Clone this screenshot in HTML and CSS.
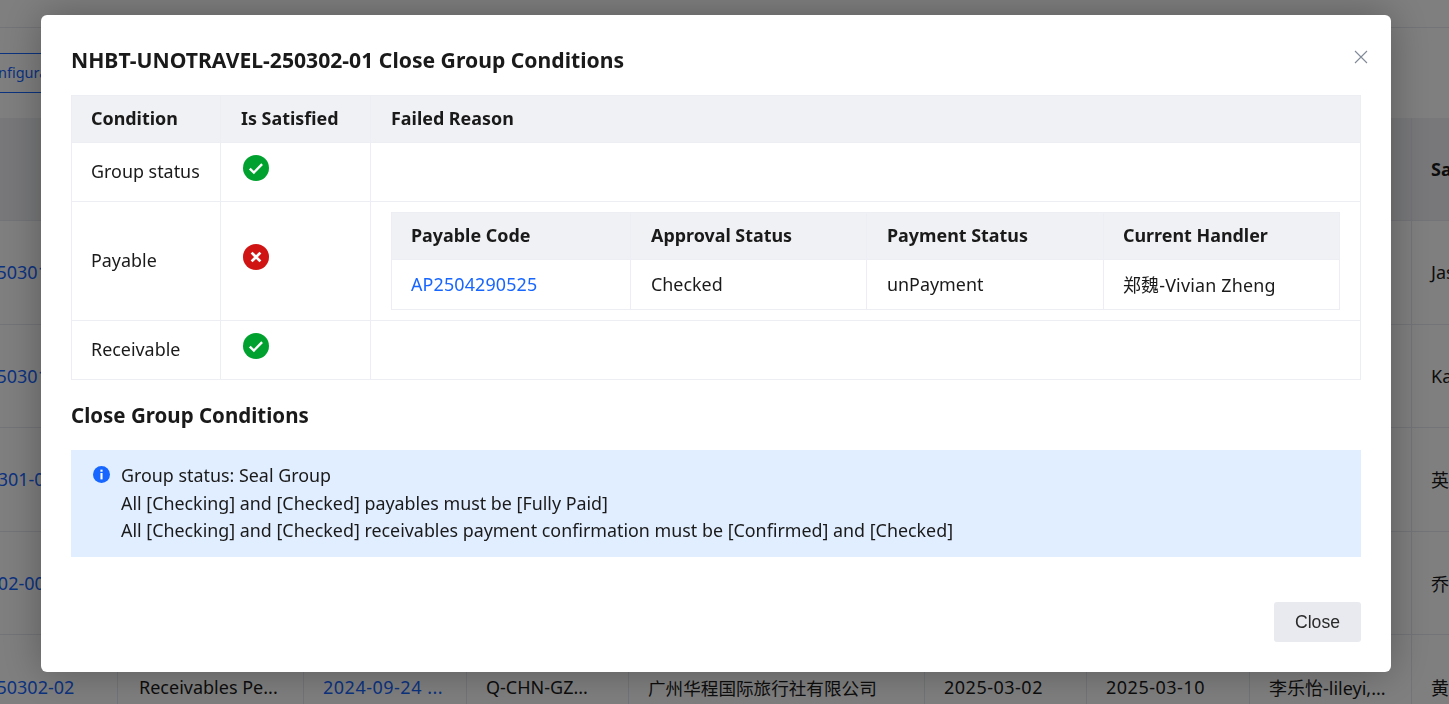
FILE: index.html
```html
<!DOCTYPE html>
<html lang="en">
<head>
<meta charset="utf-8">
<title>Close Group Conditions</title>
<link rel="stylesheet" href="styles.css">
</head>
<body>
<div class="page">
  <div class="topbar"></div>
  <div class="toolbar"><button class="cfg">Configuration</button></div>
  <div class="list">
    <div class="lrow lhead">
      <div class="c">Group Code</div><div class="c">Status</div><div class="c">Date</div><div class="c">Route</div><div class="c">Agency</div><div class="c">Start</div><div class="c">End</div><div class="c">Sales</div><div class="c">Sales</div>
    </div>
    <div class="lrow">
      <div class="c link">NHBT-UNOTRAVEL-250301</div><div class="c"></div><div class="c"></div><div class="c"></div><div class="c"></div><div class="c"></div><div class="c"></div><div class="c"></div><div class="c">Jason</div>
    </div>
    <div class="lrow">
      <div class="c link">NHBT-UNOTRAVEL-250301</div><div class="c"></div><div class="c"></div><div class="c"></div><div class="c"></div><div class="c"></div><div class="c"></div><div class="c"></div><div class="c">Kate</div>
    </div>
    <div class="lrow">
      <div class="c link">NHBT-UNOTRAV-250301-01</div><div class="c"></div><div class="c"></div><div class="c"></div><div class="c"></div><div class="c"></div><div class="c"></div><div class="c"></div><div class="c">英</div>
    </div>
    <div class="lrow">
      <div class="c link">NHBT-UNOTRA-250302-001</div><div class="c"></div><div class="c"></div><div class="c"></div><div class="c"></div><div class="c"></div><div class="c"></div><div class="c"></div><div class="c">乔</div>
    </div>
    <div class="lrow">
      <div class="c link">NHBT-UNOTRAVEL-250302-02</div><div class="c">Receivables Pe...</div><div class="c link num">2024-09-24 ...</div><div class="c">Q-CHN-GZ...</div><div class="c cjk">广州华程国际旅行社有限公司</div><div class="c num">2025-03-02</div><div class="c num">2025-03-10</div><div class="c">李乐怡-lileyi,...</div><div class="c">黄</div>
    </div>
  </div>
</div>
<div class="overlay"></div>
<div class="modal" role="dialog">
  <div class="mhead">
    <h2 class="title">NHBT-UNOTRAVEL-250302-01 Close Group Conditions</h2>
    <svg class="x" viewBox="0 0 14 14" width="14" height="14"><path d="M1 1l12 12M13 1L1 13" fill="none" stroke="#7f8a98" stroke-width="1.1"/></svg>
  </div>
  <table class="tbl outer">
    <thead><tr><th class="w1">Condition</th><th class="w2">Is Satisfied</th><th>Failed Reason</th></tr></thead>
    <tbody>
      <tr class="r59"><td>Group status</td><td class="ic"><svg class="st" viewBox="0 0 26 26" width="26" height="26"><circle cx="13" cy="13" r="13" fill="#00a12e"/><path d="M6.8 13.6l4.1 3.9 8.2-8.4" fill="none" stroke="#fff" stroke-width="2.4"/></svg></td><td></td></tr>
      <tr><td>Payable</td><td class="ic"><svg class="st" viewBox="0 0 26 26" width="26" height="26"><circle cx="13" cy="13" r="13" fill="#d01414"/><path d="M8.6 8.6l8.8 8.8M17.4 8.6l-8.8 8.8" fill="none" stroke="#fff" stroke-width="2.7"/></svg></td>
        <td class="nest">
          <table class="tbl inner">
            <thead><tr><th class="i1">Payable Code</th><th class="i2">Approval Status</th><th class="i3">Payment Status</th><th>Current Handler</th></tr></thead>
            <tbody><tr><td><span class="alink">AP2504290525</span></td><td>Checked</td><td>unPayment</td><td class="wide">郑魏-Vivian Zheng</td></tr></tbody>
          </table>
        </td></tr>
      <tr class="r59"><td>Receivable</td><td class="ic"><svg class="st" viewBox="0 0 26 26" width="26" height="26"><circle cx="13" cy="13" r="13" fill="#00a12e"/><path d="M6.8 13.6l4.1 3.9 8.2-8.4" fill="none" stroke="#fff" stroke-width="2.4"/></svg></td><td></td></tr>
    </tbody>
  </table>
  <h3 class="sub">Close Group Conditions</h3>
  <div class="alert">
    <svg class="info" viewBox="0 0 16 16" width="17" height="17"><circle cx="8" cy="8" r="8" fill="#1766ff"/><rect x="7" y="3.4" width="2" height="2" fill="#fff"/><rect x="7" y="6.6" width="2" height="6" fill="#fff"/></svg>
    <div class="atext">
      <div>Group status: Seal Group</div>
      <div>All [Checking] and [Checked] payables must be [Fully Paid]</div>
      <div>All [Checking] and [Checked] receivables payment confirmation must be [Confirmed] and [Checked]</div>
    </div>
  </div>
  <div class="foot"><button class="close">Close</button></div>
</div>
</body>
</html>
```
FILE: styles.css
```css
* { box-sizing: border-box; }
html, body { margin: 0; height: 100%; overflow: hidden; }
body { font-family: "Noto Sans", "Noto Sans CJK SC", sans-serif; font-size: 18px; color: #1a1a1a; background: #fff; }
.page { height: 704px; overflow: hidden; }
.topbar { height: 28px; border-bottom: 1px solid #e6e8ee; }
.toolbar { height: 90px; padding-top: 25px; }
.cfg { display: block; margin-left: -46px; width: 130px; height: 40px; padding: 0 0 2px 25px; text-align: left; font: inherit; font-size: 14.5px; white-space: nowrap; color: #1766ff; background: #fff; border: 1px solid #1766ff; border-radius: 3px; }
.list { margin-left: -216px; }
.lrow { display: grid; grid-template-columns: 334px 186px 163px 162px 296px 162px 163px 162px 200px; height: 103.5px; border-bottom: 1px solid #e6e8ee; }
.lhead { height: 103px; background: #f0f1f4; font-weight: 700; }
.c { display: flex; align-items: center; padding: 0 20px 0 19px; white-space: nowrap; overflow: hidden; border-right: 1px solid #e6e8ee; }
.c:first-child { padding-left: 40px; }
.c:nth-child(2) { padding-left: 21px; }
.lrow:last-child .c { height: 104px; }
.link { color: #1766ff; }
.num { letter-spacing: .5px; }
.cjk { font-size: 17.6px; }
.overlay { position: fixed; inset: 0; background: rgba(0,0,0,.5); }
.modal { position: fixed; left: 41px; top: 15px; width: 1350px; height: 657px; padding: 30px 30px 30px; background: #fff; border-radius: 6px; box-shadow: 0 0 40px rgba(0,0,0,.3); display: flex; flex-direction: column; }
.mhead { display: flex; justify-content: space-between; align-items: flex-start; height: 50px; }
.title { margin: 0; font-size: 21.15px; font-weight: 700; line-height: 30px; }
.x { margin: 5px -7px 0 0; }
.tbl { border-collapse: collapse; table-layout: fixed; width: 100%; }
.tbl th, .tbl td { border: 1px solid #eceef3; padding: 0 19px 2px 20px; text-align: left; font-size: 17.9px; white-space: nowrap; }
.tbl th:first-child, .tbl td:first-child, .tbl th:last-child, .tbl td:last-child { padding-left: 20px; }
.outer > thead > tr > th:first-child, .outer > tbody > tr > td:first-child, .inner th:first-child, .inner td:first-child, .inner th:last-child, .inner td:last-child { padding-left: 19px; }
.tbl th { background: #f0f1f4; font-weight: 700; height: 47px; }
.w1 { width: 149px; }
.w2 { width: 150px; }
.r59 td { height: 59px; }
.tbl td.ic { padding: 0 19px 9px 20px; }
.st { display: block; margin-left: 2px; }
.tbl td.nest { padding: 10px 20px; }
.inner th { height: 47px; }
.inner td { height: 50px; }
.i1 { width: 239px; }
.i2 { width: 236px; }
.i3 { width: 237px; }
.alink { color: #1766ff; letter-spacing: .15px; }
.wide { letter-spacing: .2px; }
.sub { margin: 19px 0 19px; font-size: 20.5px; font-weight: 700; line-height: 32px; }
.alert { display: flex; background: #e1eeff; padding: 12px 22px 12px 22px; gap: 11px; height: 107px; }
.info { margin-top: 4px; flex: none; }
.atext { font-size: 17.87px; line-height: 27.5px; }
.foot { margin-top: auto; display: flex; justify-content: flex-end; }
.close { width: 87px; height: 40px; background: #e9eaef; border: 0; border-radius: 3px; font-family: "Liberation Sans", sans-serif; font-size: 17.6px; color: #2a2a2a; }
```
